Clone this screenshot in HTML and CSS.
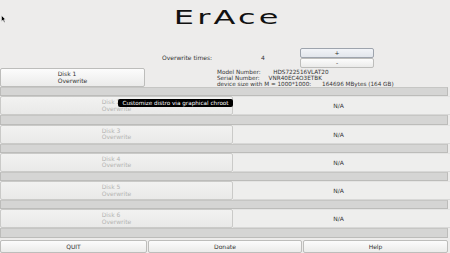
FILE: index.html
```html
<!DOCTYPE html>
<html lang="en">
<head>
    <meta charset="UTF-8">
    <title>ErAce</title>
    <link rel="stylesheet" href="styles.css">
</head>
<body>

<div class="window">
    <div class="header">
        <h1 class="title">ErAce</h1>
    </div>

    <div class="controls">
        <span class="times-label">Overwrite times:</span>
        <span class="times-value">4</span>
        <div class="stepper">
            <button class="btn step-btn focused">+</button>
            <button class="btn step-btn">-</button>
        </div>
    </div>

    <div class="disk-row first">
        <button class="btn disk-btn small"><span class="disk-text">Disk 1<br>Overwrite</span></button>
        <div class="info">
            <div class="info-line">Model Number:       HDS722516VLAT20</div>
            <div class="info-line">Serial Number:     VNR40EC4O3ETBK</div>
            <div class="info-line">device size with M = 1000*1000:      164696 MBytes (164 GB)</div>
        </div>
    </div>
    <div class="bar"></div>

    <div class="disk-row">
        <button class="btn disk-btn" disabled><span class="disk-text">Disk 2<br>Overwrite</span></button>
        <div class="status">N/A</div>
    </div>
    <div class="bar"></div>

    <div class="disk-row">
        <button class="btn disk-btn" disabled><span class="disk-text">Disk 3<br>Overwrite</span></button>
        <div class="status">N/A</div>
    </div>
    <div class="bar"></div>

    <div class="disk-row">
        <button class="btn disk-btn" disabled><span class="disk-text">Disk 4<br>Overwrite</span></button>
        <div class="status">N/A</div>
    </div>
    <div class="bar"></div>

    <div class="disk-row">
        <button class="btn disk-btn" disabled><span class="disk-text">Disk 5<br>Overwrite</span></button>
        <div class="status">N/A</div>
    </div>
    <div class="bar"></div>

    <div class="disk-row">
        <button class="btn disk-btn" disabled><span class="disk-text">Disk 6<br>Overwrite</span></button>
        <div class="status">N/A</div>
    </div>
    <div class="bar"></div>

    <div class="footer">
        <button class="btn foot-btn">QUIT</button>
        <button class="btn foot-btn">Donate</button>
        <button class="btn foot-btn">Help</button>
    </div>

    <div class="tooltip">Customize distro via graphical chroot</div>

    <svg class="cursor" width="5" height="8" viewBox="0 0 5 8">
        <path d="M0.5 0.5 L0.5 6.5 L2 5 L3.2 7.5 L4 7 L2.9 4.6 L4.6 4.6 Z" fill="#000" stroke="#fff" stroke-width="0.5"/>
    </svg>
</div>

</body>
</html>
```

FILE: styles.css
```css
body {
    margin: 0;
    background: #edeceb;
    font-family: 'DejaVu Sans', sans-serif;
    font-size: 6px;
    color: #333;
}

.window {
    position: relative;
    width: 450px;
    height: 253px;
    overflow: hidden;
    display: flex;
    flex-direction: column;
}

.header {
    height: 47px;
    text-align: center;
}

.title {
    display: inline-block;
    margin: 5px 0 0 6px;
    font-size: 20px;
    font-weight: normal;
    letter-spacing: 2px;
    color: #111;
    transform: scaleX(1.6);
}

.btn {
    font-family: inherit;
    font-size: 6px;
    color: #333;
    margin: 0;
    padding: 0;
    background: linear-gradient(#fcfcfc, #ebebea);
    border: 1px solid #bdbdbb;
    border-radius: 2px;
}

.btn:disabled {
    color: #b4b4b2;
    background: linear-gradient(#f2f2f1, #e9e9e8);
    border-color: #cacac8;
}

.controls {
    height: 21px;
    display: flex;
    align-items: center;
    padding-left: 162px;
}

.times-label {
    width: 99px;
}

.times-value {
    width: 39px;
}

.stepper {
    display: flex;
    flex-direction: column;
    width: 74px;
}

.step-btn {
    height: 10px;
    line-height: 6px;
}

.step-btn.focused {
    background: linear-gradient(#f2f4f8, #e2e6ec);
    border-color: #9ea4ad;
}

.disk-row {
    height: 19px;
    display: flex;
}

.disk-btn {
    width: 233px;
    height: 19px;
    text-align: center;
}

.disk-btn.small {
    width: 145px;
}

.disk-text {
    display: inline-block;
    text-align: left;
    line-height: 6.5px;
}

.info {
    margin-left: 72px;
    padding-top: 1px;
    font-size: 5.7px;
    line-height: 6px;
    color: #333;
}

.info-line {
    white-space: pre;
}

.status {
    flex: 1;
    display: flex;
    align-items: center;
    justify-content: center;
    padding-right: 6px;
    background: #eeeeed;
    border-top: 1px solid #e4e4e3;
    border-bottom: 1px solid #d8d8d7;
}

.bar {
    height: 9.25px;
    box-sizing: border-box;
    margin-right: 2px;
    background: #d5d5d4;
    border: 1px solid #bcbcba;
    border-top-color: #c6c6c4;
}

.footer {
    display: grid;
    grid-template-columns: 147px 154px 1fr;
    gap: 1px;
    margin-top: 2px;
    padding-right: 2px;
}

.foot-btn {
    height: 13px;
}

.tooltip {
    position: absolute;
    left: 118px;
    top: 99px;
    width: 115px;
    height: 8px;
    box-sizing: border-box;
    background: #000;
    color: #fff;
    border-radius: 2px;
    font-size: 5.7px;
    line-height: 8px;
    text-align: center;
    white-space: nowrap;
}

.cursor {
    position: absolute;
    left: 1px;
    top: 15px;
}
```
